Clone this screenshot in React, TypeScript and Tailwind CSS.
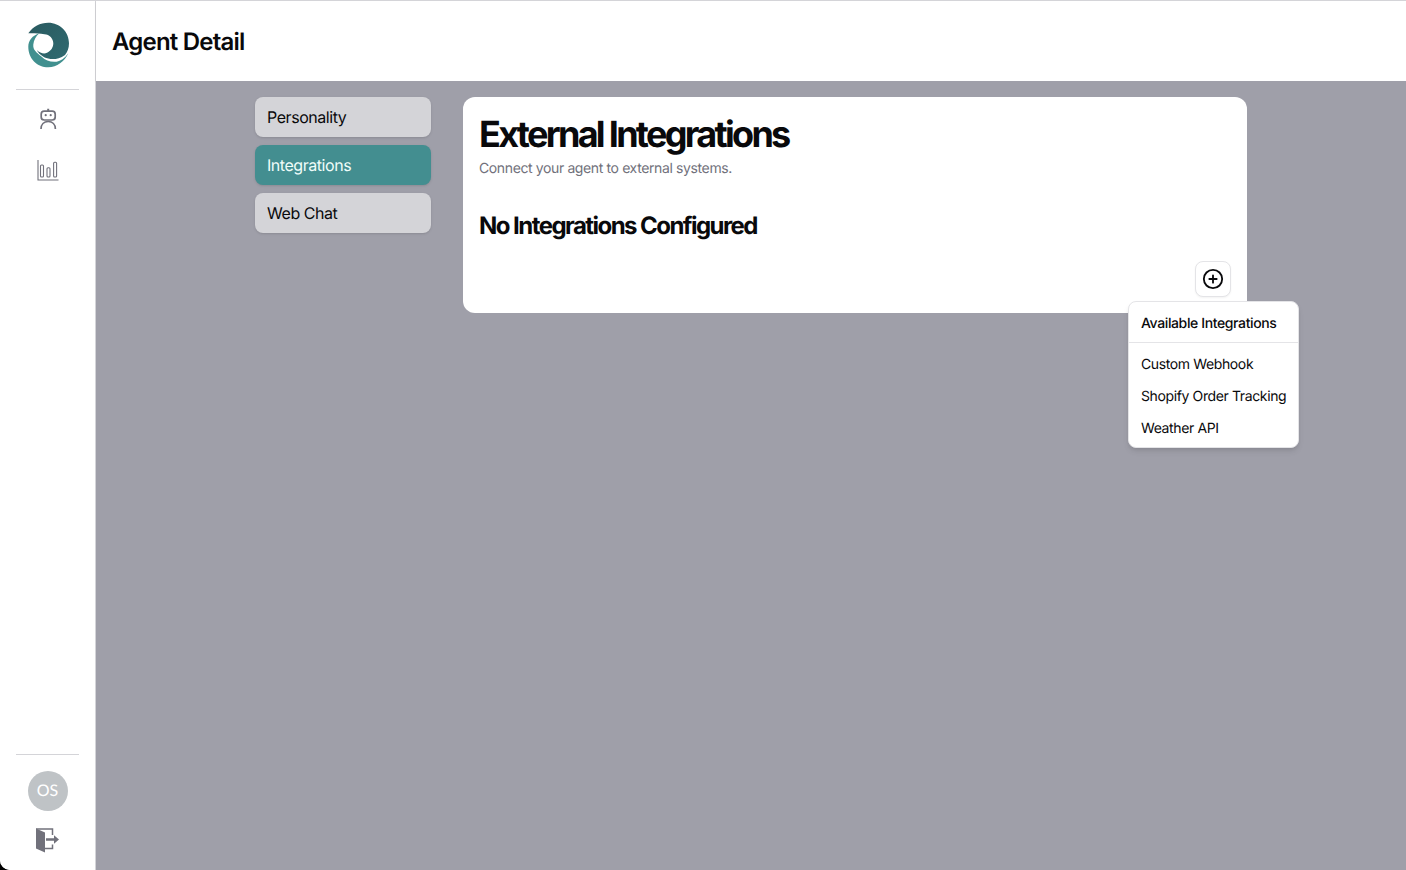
export default function App() {
  return (
    <div className="h-[870px] w-[1406px] overflow-hidden bg-black font-['Inter',sans-serif] [text-rendering:geometricPrecision]">
      <div className="flex h-full w-full overflow-hidden rounded-bl-[10px] border-t border-[#d4d4d8] bg-white">
        <aside className="flex h-full w-[96px] shrink-0 flex-col items-center border-r border-[#d4d4d8] bg-white px-4">
          <div className="flex h-[89px] w-full shrink-0 items-center justify-center border-b border-[#d4d4d8]">
            <svg width="44" height="46" viewBox="-1 0 44 46">
              <defs>
                <linearGradient id="dk" x1="0" y1="0" x2="1" y2="1">
                  <stop offset="0" stopColor="#2a5a60" />
                  <stop offset="1" stopColor="#2f6a70" />
                </linearGradient>
              </defs>
              <path
                d="M1.300 11.300C6 4.500 13 0.700 21.300 0.700C33 0.700 42 10 42 21.300C42 26 40.500 30 38 33C33 36.500 28 37.500 23.500 37C17.500 36.300 12.500 33 9.700 28C13 31 17 32.300 20 30.700C24 29 26.300 25.500 26.300 21.300C26.300 16.500 22.500 12.500 17.500 12.200C12 11.500 6 11 1.300 11.300Z"
                fill="url(#dk)"
              />
              <path
                d="M12.300 11.300C5.500 13.500 1.300 18.500 1.300 24.700C1.300 36.500 10 45.300 21.300 45.300C30 45.300 37.500 39.500 41.300 31.300C37.500 36.500 33.500 39 29.700 39.700C24 40.500 18.500 38.500 14.700 34.700C9.500 30.500 5.800 28 6.300 22.500C6.800 18 9 14 12.300 11.300Z"
                fill="#41908f"
              />
            </svg>
          </div>
          <div className="flex flex-col items-center gap-[26px] pt-[18px]">
            <svg width="24" height="24" viewBox="0 0 24 24" fill="none" stroke="#71717b" strokeWidth="1.700">
              <path d="M12.200 0.800V3" strokeWidth="2" />
              <rect x="5.200" y="3.200" width="14" height="8.800" rx="3" />
              <circle cx="9.700" cy="7.200" r="1.100" fill="#71717b" stroke="none" />
              <circle cx="14.700" cy="7.200" r="1.100" fill="#71717b" stroke="none" />
              <path d="M5 21C5 16.500 8 13.500 12.200 13.500C16.400 13.500 19.400 16.500 19.400 21" />
            </svg>
            <svg width="24" height="24" viewBox="0 0 24 24" fill="none" stroke="#71717b" strokeWidth="1.100">
              <path d="M2 2V22H22.500" />
              <rect x="4.500" y="7" width="3" height="12" rx="1" />
              <rect x="11" y="9.700" width="3" height="9.300" rx="1" />
              <rect x="17.600" y="4.300" width="3" height="14.700" rx="1" />
            </svg>
          </div>
          <div className="mt-auto flex w-full flex-col items-center border-t border-[#d4d4d8] pt-4 pb-[16px]">
            <div className="flex h-10 w-10 items-center justify-center rounded-full bg-[#bfc3c6] pb-px font-['Lato',sans-serif] text-[16px] text-white">
              OS
            </div>
            <svg className="mt-[17px]" width="24" height="26" viewBox="1 0 24 26">
              <path d="M1 0.500L10 4.500V24.500L1 20.500Z" fill="#71717b" />
              <path d="M1 1H17.500V7M17.500 16.500V20.500H10" fill="none" stroke="#71717b" strokeWidth="1.500" />
              <path d="M11 10.300H19V7.300L24 11.500L19 15.700V12.700H11Z" fill="#71717b" />
            </svg>
          </div>
        </aside>

        <div className="flex min-w-0 flex-1 flex-col">
          <header className="flex h-[80px] shrink-0 items-center bg-white px-4 pt-[2px] shadow-[0_1px_2px_rgba(0,0,0,0.1)]">
            <h1 className="text-2xl font-semibold tracking-[-0.8px] text-[#09090b]">Agent Detail</h1>
          </header>
          <main className="flex-1 bg-[#9f9fa9]">
            <div className="mx-auto flex w-[1024px] items-start gap-8 p-4">
              <nav className="flex w-[176px] shrink-0 flex-col gap-2">
                <div className="flex h-10 items-center rounded-lg bg-[#d4d4d8] px-3 text-base tracking-[-0.45px] text-[#09090b] shadow-sm">
                  Personality
                </div>
                <div className="flex h-10 items-center rounded-lg bg-[#438e90] px-3 text-base tracking-[-0.45px] text-[#f0fdfa] shadow-sm">
                  Integrations
                </div>
                <div className="flex h-10 items-center rounded-lg bg-[#d4d4d8] px-3 text-base tracking-[-0.45px] text-[#09090b] shadow-sm">
                  Web Chat
                </div>
              </nav>
              <section className="flex h-[216px] w-[784px] flex-col rounded-xl bg-white px-4 pt-[17px] pb-4">
                <h2 className="text-4xl leading-10 font-bold tracking-[-2.7px] text-[#09090b]">External Integrations</h2>
                <p className="mt-[5px] text-sm leading-5 tracking-[-0.38px] text-[#71717b]">
                  Connect your agent to external systems.
                </p>
                <h3 className="mt-[31px] text-2xl leading-8 font-bold tracking-[-1.55px] text-[#09090b]">
                  No Integrations Configured
                </h3>
                <div className="relative mt-auto flex justify-end">
                  <button className="flex h-9 w-9 items-center justify-center rounded-lg border border-[#e4e4e7] bg-white shadow-xs">
                    <svg width="22" height="22" viewBox="0 0 24 24" fill="none" stroke="#09090b" strokeWidth="2" strokeLinecap="round">
                      <circle cx="12" cy="12" r="10" />
                      <path d="M8 12h8M12 8v8" />
                    </svg>
                  </button>
                  <div className="absolute top-[40px] right-[-68px] w-[171px] rounded-lg border border-[#e4e4e7] bg-white p-1 text-sm whitespace-nowrap text-[#09090b] shadow-md">
                    <div className="px-2 pt-2 pb-1 leading-5 font-medium tracking-[-0.38px]">Available Integrations</div>
                    <div className="-mx-1 mt-1 mb-1 h-px bg-[#e4e4e7]" />
                    <div className="px-2 pt-2 pb-1 leading-5 tracking-[-0.38px]">Custom Webhook</div>
                    <div className="px-2 pt-2 pb-1 leading-5 tracking-[-0.38px]">Shopify Order Tracking</div>
                    <div className="px-2 pt-2 pb-1 leading-5 tracking-[-0.38px]">Weather API</div>
                  </div>
                </div>
              </section>
            </div>
          </main>
        </div>
      </div>
    </div>
  );
}
